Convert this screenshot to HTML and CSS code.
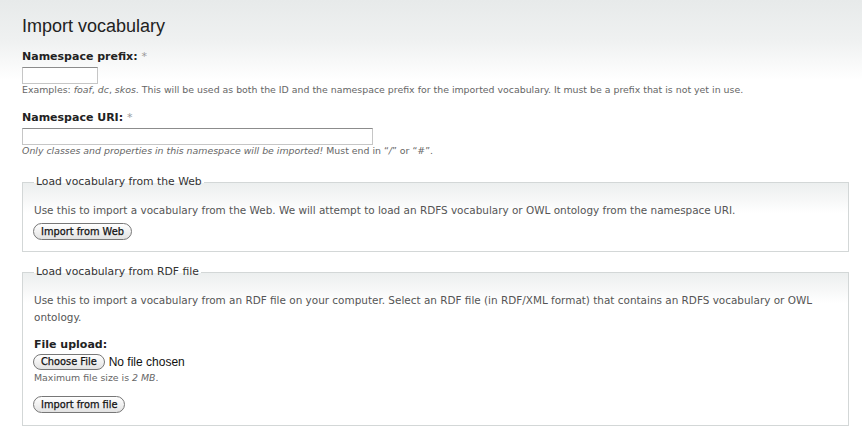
FILE: index.html
```html
<!DOCTYPE html>
<html>
<head>
<meta charset="utf-8">
<link rel="stylesheet" href="styles.css">
</head>
<body>
<div class="page">
  <h1 class="title">Import vocabulary</h1>

  <div class="item">
    <label class="label">Namespace prefix: <span class="req">*</span></label>
    <input class="text short" type="text">
    <div class="desc">Examples: <em>foaf</em>, <em>dc</em>, <em>skos</em>. This will be used as both the ID and the namespace prefix for the imported vocabulary. It must be a prefix that is not yet in use.</div>
  </div>

  <div class="item">
    <label class="label">Namespace URI: <span class="req">*</span></label>
    <input class="text long" type="text">
    <div class="desc"><em>Only classes and properties in this namespace will be imported!</em> Must end in “<em>/</em>” or “<em>#</em>”.</div>
  </div>

  <fieldset class="box">
    <legend class="legend">Load vocabulary from the Web</legend>
    <p class="info">Use this to import a vocabulary from the Web. We will attempt to load an RDFS vocabulary or OWL ontology from the namespace URI.</p>
    <button class="btn" type="button">Import from Web</button>
  </fieldset>

  <fieldset class="box second">
    <legend class="legend">Load vocabulary from RDF file</legend>
    <p class="info">Use this to import a vocabulary from an RDF file on your computer. Select an RDF file (in RDF/XML format) that contains an RDFS vocabulary or OWL ontology.</p>
    <label class="label upload-label">File upload:</label>
    <div class="filerow">
      <button class="btn choose" type="button">Choose File</button>
      <span class="nofile">No file chosen</span>
    </div>
    <div class="desc max">Maximum file size is <em>2 MB</em>.</div>
    <button class="btn import-file" type="button">Import from file</button>
  </fieldset>
</div>
</body>
</html>
```

FILE: styles.css
```css
html, body {
  margin: 0;
  padding: 0;
  background: #fff;
}

.page {
  width: 862px;
  height: 436px;
  box-sizing: border-box;
  padding: 15px 13px 0 22px;
  background: linear-gradient(#e7eaea 0, #eff1f1 40px, #fff 80px);
  font-family: "DejaVu Sans", Verdana, sans-serif;
  color: #333;
  overflow: hidden;
}

.title {
  margin: 0;
  font-family: "Liberation Sans", Arial, sans-serif;
  font-weight: normal;
  font-size: 18px;
  line-height: 22px;
  color: #222;
}

.item {
  margin-top: 13px;
}

.item + .item {
  margin-top: 15px;
}

.label {
  display: block;
  font-size: 11px;
  line-height: 14px;
  font-weight: bold;
  color: #222;
}

.req {
  color: #999;
  font-weight: normal;
}

.text {
  display: block;
  box-sizing: border-box;
  height: 17px;
  margin: 3px 0 0 0;
  padding: 0 2px;
  border: 1px solid #c6c6c6;
  border-top-color: #8c8c8c;
  background: #fff;
}

.short { width: 76px; }
.long { width: 351px; }

.desc {
  font-size: 9.4px;
  line-height: 12px;
  color: #666;
}

.box {
  margin: 18px 0 0 0;
  padding: 0 11px 11px 11px;
  border: 1px solid #d3d7d7;
  background: linear-gradient(#ecefef 0, #f6f7f7 16px, #fff 30px);
  min-width: 0;
}

.second {
  margin-top: 13px;
  padding-bottom: 12px;
}

.legend {
  padding: 0 2px;
  margin-left: 0;
  font-size: 10.8px;
  line-height: 14px;
  color: #333;
}

.info {
  margin: 13px 0 0 0;
  font-size: 10.45px;
  line-height: 17px;
  color: #555;
}

.btn {
  display: block;
  box-sizing: border-box;
  height: 17px;
  margin: 4px 0 0 -1px;
  padding: 0 7px;
  border: 1px solid #777;
  border-radius: 9px;
  background: linear-gradient(#ffffff, #f1f1f1 50%, #e2e2e2);
  font-family: "DejaVu Sans", Verdana, sans-serif;
  font-size: 9.8px;
  line-height: 15px;
  color: #111;
  -webkit-text-stroke: 0.25px #111;
}

.upload-label {
  margin-top: 12px;
}

.filerow {
  display: flex;
  align-items: center;
  gap: 4px;
  margin-top: 2px;
}

.filerow .choose {
  margin: 0 0 0 -1px;
  height: 16px;
  line-height: 14px;
}

.nofile {
  font-family: "Liberation Sans", Arial, sans-serif;
  font-size: 12px;
  color: #111;
}

.max {
  margin-top: 2px;
}

.import-file {
  margin-top: 12px;
}
```
